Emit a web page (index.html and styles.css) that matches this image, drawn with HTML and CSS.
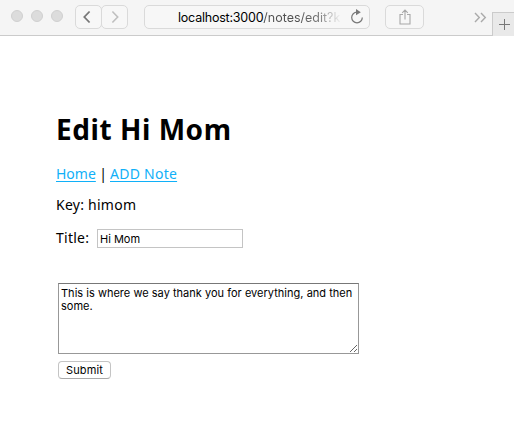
FILE: index.html
```html
<!DOCTYPE html>
<html lang="en">
<head>
<meta charset="utf-8">
<title>Edit Hi Mom</title>
<link rel="stylesheet" href="styles.css">
</head>
<body>
<header class="toolbar">
  <div class="lights"><i></i><i></i><i></i></div>
  <div class="nav">
    <span class="tool back"><svg width="27" height="24" viewBox="0 0 27 24"><path d="M14.6 6.5 9.3 12l5.3 5.5"/></svg></span>
    <span class="tool forward"><svg width="27" height="24" viewBox="0 0 27 24"><path d="m11.4 6.5 5.3 5.5-5.3 5.5"/></svg></span>
  </div>
  <div class="tool address">
    <span class="url"><span class="host">localhost:3000</span><span class="path">/notes/edit?k</span></span>
    <svg class="reload" width="14" height="16" viewBox="0 0 14 16"><path d="M7 3.2A5.3 5.3 0 1 0 12.3 8.5"/><path class="tip" d="M6 0 10.8 3.3 6 6.3z"/></svg>
  </div>
  <span class="tool share"><svg width="12" height="16" viewBox="0 0 12 16"><path d="M4 5.5H1v9.5h10V5.5H8M6 10.5V1M3.2 3.8 6 1l2.8 2.8"/></svg></span>
  <svg class="more" width="13" height="11" viewBox="0 0 13 11"><path d="m1 1 4.3 4.5L1 10M7 1l4.3 4.5L7 10"/></svg>
  <span class="newtab"><svg width="11" height="11" viewBox="0 0 11 11"><path d="M5.5 0v11M0 5.5h11"/></svg></span>
</header>
<main class="page">
  <h1 class="heading">Edit Hi Mom</h1>
  <p class="links"><a href="#" class="home">Home</a><span class="bar">|</span><a href="#" class="add">ADD Note</a></p>
  <form>
    <p class="key">Key: himom</p>
    <p class="title"><label for="title">Title:</label><input id="title" type="text" value="Hi Mom"></p>
    <textarea class="body">This is where we say thank you for everything, and then some.</textarea>
    <button class="submit" type="button">Submit</button>
  </form>
</main>
</body>
</html>
```

FILE: styles.css
```css
* { box-sizing: border-box; }
body { margin: 0; background: #fff; color: #000; font-family: "Noto Sans", sans-serif; font-size: 14px; }
svg { fill: none; display: block; flex: none; }
.toolbar { display: flex; height: 36px; padding-top: 5px; background: #f5f5f5; border-bottom: 1px solid #cbcbcb; }
.lights { display: flex; gap: 8px; margin: 5px 12px 0 11px; }
.lights i { width: 12px; height: 12px; border-radius: 50%; background: #dcdcdc; border: 1px solid #d0d0d0; }
.tool { display: flex; height: 24px; border: 1px solid #dadada; border-radius: 5px; background: #f7f7f7; }
.nav { display: flex; width: 53px; margin-right: 16px; }
.nav .tool { width: 27px; }
.nav svg { margin: -1px; }
.nav .forward { margin-left: -1px; }
.back svg { stroke: #777; stroke-width: 1.8; }
.forward svg { stroke: #bfbfbf; stroke-width: 1.6; }
.address { width: 226px; padding: 0 5px 0 33px; justify-content: space-between; }
.url { font: 12.5px/23px Inter, sans-serif; white-space: nowrap; letter-spacing: -0.22px; }
.path { letter-spacing: 0; background: linear-gradient(90deg, #505050 45%, #777 72%, #eee 100%); background-clip: text; -webkit-background-clip: text; color: transparent; }
.reload { margin-top: 3px; stroke: #777; stroke-width: 1.2; }
.tip { fill: #777; stroke: none; }
.share { width: 39px; margin-left: 15px; justify-content: center; padding-top: 3px; }
.share svg { stroke: #a8a8a8; stroke-width: 1.1; }
.more { margin: 7px 5px 0 50px; stroke: #aaa; stroke-width: 1.4; }
.newtab { width: 22px; height: 24px; margin-top: 7px; padding: 6px 0 0 6px; background: #e9e9e9; border: 1px solid #cbcbcb; border-width: 1px 0 0 1px; }
.newtab svg { stroke: #777; stroke-width: 1; }
.page { padding: 73px 56px 0; }
.heading { margin: 0; font-size: 28px; line-height: 40px; font-weight: 700; white-space: nowrap; letter-spacing: 0.55px; }
p { margin: 0; line-height: 20px; }
.links { display: flex; margin-top: 15px; }
.links a { color: #10b0f8; text-decoration-thickness: 1px; text-underline-offset: 2px; }
.home { width: 40px; }
.add { letter-spacing: 0.25px; }
.bar { width: 14px; text-align: center; }
.key { margin-top: 11px; letter-spacing: 0.25px; }
.title { display: flex; margin-top: 13px; }
.title label { width: 41px; letter-spacing: 0.25px; }
input, .body, .submit { font-family: Inter, sans-serif; font-size: 11px; color: #000; margin: 0; }
input { width: 146px; height: 19px; margin-top: 1px; padding: 1px 2px; border: 1px solid #c4c4c4; outline: 0; }
.body { display: block; width: 301px; height: 71px; margin: 35px 0 0 2px; padding: 3px 2px; border: 1px solid #989898; border-top-color: #777; line-height: 13px; letter-spacing: 0.02px; overflow: hidden; resize: both; }
.submit { display: block; width: 53px; height: 18px; margin: 7px 0 0 2px; padding: 0; border: 1px solid #c4c4c4; border-bottom-color: #aaa; border-radius: 4px; background: #fff; line-height: 16px; letter-spacing: 0.1px; }
```
